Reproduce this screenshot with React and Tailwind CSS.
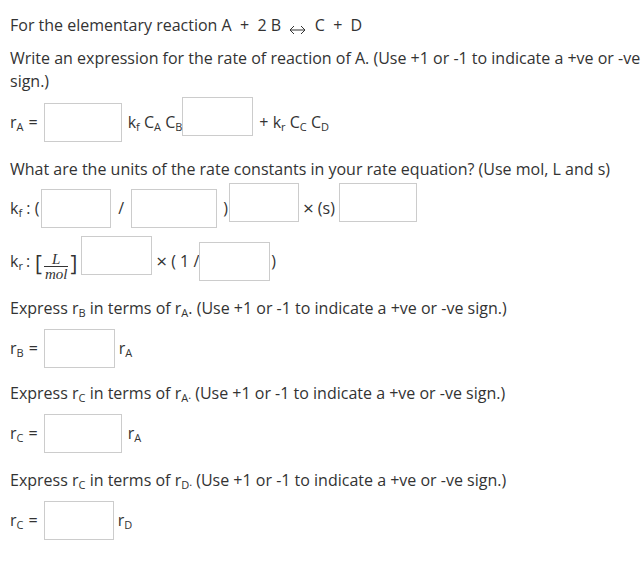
import React from 'react';

const Box = ({ w = 'w-[70px]', up = false }) => (
  <span
    className={`inline-block h-[39px] ${w} border border-[#cccccc] bg-white shrink-0 ${up ? 'mb-[12px]' : ''}`}
  />
);

const Sub = ({ children }) => <sub className="text-[11px]">{children}</sub>;

const R = ({ s }) => (
  <span className="whitespace-nowrap">
    r<Sub>{s}</Sub>
  </span>
);

const Fraction = () => (
  <span className="inline-flex flex-col items-center mt-[9px] mx-[2px] font-['Liberation_Serif',serif] italic text-[15px]">
    <span className="leading-[13px] px-[2px]">L</span>
    <span className="border-t border-[#333] leading-[12px] pt-[1px] px-[1px]">mol</span>
  </span>
);

const Arrow = () => (
  <svg width="17" height="10" viewBox="0 0 17 10" className="inline-block align-[-4px]" fill="none" stroke="#333" strokeWidth="1">
    <path d="M1 5h15M5 1L1 5l4 4M12 1l4 4-4 4" />
  </svg>
);

const Times = () => <span className="text-[19px] leading-none">×</span>;

export default function App() {
  return (
    <div className="pl-[10px] pr-[2px] pt-[14px] pb-[40px] text-[#333] font-['Open_Sans',sans-serif] text-[16px] leading-[23px] bg-white">
      <p className="whitespace-nowrap">
        For the elementary reaction A&nbsp;&nbsp;+&nbsp;&nbsp;2 B&nbsp;&nbsp;<Arrow />&nbsp;&nbsp;C&nbsp;&nbsp;+&nbsp;&nbsp;D
      </p>

      <p className="mt-[10px]">
        <span className="whitespace-nowrap">
          Write an expression for the rate of reaction of A. (Use +1 or -1 to indicate a +ve or -ve
        </span>
        <br />
        sign.)
      </p>

      {/* r_A row */}
      <div className="mt-[4px] flex items-center">
        <R s="A" />
        <span className="ml-[5px] mr-[6px]">=</span>
        <Box w="w-[78px]" />
        <span className="ml-[6px] whitespace-nowrap">
          k<Sub>f</Sub> C<Sub>A</Sub> C<Sub>B</Sub>
        </span>
        <Box w="w-[71px]" up />
        <span className="ml-[6px] whitespace-nowrap">
          + k<Sub>r</Sub> C<Sub>C</Sub> C<Sub>D</Sub>
        </span>
      </div>

      <p className="mt-[10px]">What are the units of the rate constants in your rate equation? (Use mol, L and s)</p>

      {/* k_f row */}
      <div className="mt-[2px] flex items-center">
        <span className="whitespace-nowrap mr-[2px]">
          k<Sub>f</Sub> : (
        </span>
        <Box w="w-[70px]" />
        <span className="mx-[7px]">/</span>
        <Box w="w-[86px]" />
        <span className="ml-[6px] mr-[1px]">)</span>
        <Box w="w-[70px]" up />
        <span className="ml-[4px] mr-[4px] whitespace-nowrap flex items-center gap-[4px]">
          <Times /> (s)
        </span>
        <Box w="w-[78px]" up />
      </div>

      {/* k_r row */}
      <div className="mt-[2px] flex items-center">
        <span className="whitespace-nowrap flex items-center">
          <span>
            k<Sub>r</Sub>
          </span>
          <span className="ml-[3px]">:</span>
          <span className="ml-[5px] text-[21px] leading-none mt-[3px]">[</span>
          <Fraction />
          <span className="text-[21px] leading-none mt-[3px]">]</span>
        </span>
        <span className="ml-[4px]" />
        <Box w="w-[71px]" up />
        <span className="ml-[4px] whitespace-nowrap flex items-center gap-[4px]">
          <Times /> ( 1 /
        </span>
        <Box w="w-[71px]" />
        <span className="ml-[1px]">)</span>
      </div>

      <p className="mt-[10px]">
        Express <R s="B" /> in terms of <R s="A" />. (Use +1 or -1 to indicate a +ve or -ve sign.)
      </p>
      <div className="mt-[9px] flex items-center">
        <R s="B" />
        <span className="ml-[5px] mr-[6px]">=</span>
        <Box w="w-[71px]" />
        <span className="ml-[4px]">
          <R s="A" />
        </span>
      </div>

      <p className="mt-[14px]">
        Express <R s="C" /> in terms of <R s="A" />
        <span className="text-[11px]">.</span> (Use +1 or -1 to indicate a +ve or -ve sign.)
      </p>
      <div className="mt-[8px] flex items-center">
        <R s="C" />
        <span className="ml-[5px] mr-[6px]">=</span>
        <Box w="w-[78px]" />
        <span className="ml-[6px]">
          <R s="A" />
        </span>
      </div>

      <p className="mt-[16px]">
        Express <R s="C" /> in terms of <R s="D" />
        <span className="text-[11px]">.</span> (Use +1 or -1 to indicate a +ve or -ve sign.)
      </p>
      <div className="mt-[8px] flex items-center">
        <R s="C" />
        <span className="ml-[5px] mr-[6px]">=</span>
        <Box w="w-[70px]" />
        <span className="ml-[4px]">
          <R s="D" />
        </span>
      </div>
    </div>
  );
}
